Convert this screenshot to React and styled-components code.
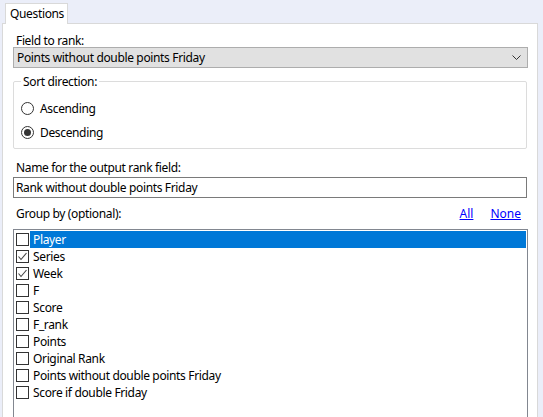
import React from "react";
import styled, { createGlobalStyle } from "styled-components";

const GlobalStyle = createGlobalStyle`
  body {
    margin: 0;
    background: #ebeef9;
    font-family: "Noto Sans", "Open Sans", sans-serif;
    font-size: 12px;
    letter-spacing: -0.35px;
    color: #000;
  }
`;

const Window = styled.div`
  width: 543px;
  height: 417px;
  overflow: hidden;
  box-sizing: border-box;
  padding: 3px 0 0 2px;
`;

const TabStrip = styled.div`
  display: flex;
  padding-left: 3px;
`;

const Tab = styled.div`
  height: 21px;
  box-sizing: border-box;
  width: 63px;
  padding-left: 4px;
  line-height: 19px;
  background: #fff;
  border: 1px solid #d9d9d9;
  border-bottom: none;
  margin-bottom: -1px;
  position: relative;
  z-index: 1;
`;

const Panel = styled.div`
  width: 536px;
  height: 400px;
  box-sizing: border-box;
  background: #fff;
  border: 1px solid #d9d9d9;
  padding: 10px 9px 0 10px;
  display: flex;
  flex-direction: column;
`;

const Label = styled.div`
  height: 13px;
  line-height: 13px;
  padding-left: 3px;
  margin-top: ${(p) => p.$top || 0}px;
  white-space: nowrap;
`;

const Select = styled.div`
  height: 21px;
  box-sizing: border-box;
  background: #e1e1e1;
  border: 1px solid #adadad;
  display: flex;
  align-items: center;
  justify-content: space-between;
  padding: 0 6px 0 3px;
`;

const GroupBox = styled.fieldset`
  margin: 7px 1px 0 0;
  padding: 13px 0 0 7px;
  height: 74px;
  box-sizing: border-box;
  border: 1px solid #dcdcdc;
  border-radius: 2px;
  display: flex;
  flex-direction: column;
  gap: 10px;
`;

const Legend = styled.legend`
  padding: 0 2px;
  margin-left: 0;
  line-height: 13px;
`;

const RadioRow = styled.label`
  display: flex;
  align-items: center;
  gap: 6px;
  height: 14px;
`;

const RadioCircle = styled.span`
  width: 13px;
  height: 13px;
  box-sizing: border-box;
  border: 1px solid #333;
  border-radius: 50%;
  display: flex;
  align-items: center;
  justify-content: center;
  &::after {
    content: "";
    display: ${(p) => (p.$checked ? "block" : "none")};
    width: 7px;
    height: 7px;
    border-radius: 50%;
    background: #333;
  }
`;

const TextInput = styled.div`
  height: 21px;
  box-sizing: border-box;
  border: 1px solid #7a7a7a;
  margin-top: 3px;
  padding-left: 2px;
  line-height: 19px;
  margin-right: 1px;
`;

const GroupHeader = styled.div`
  display: flex;
  justify-content: space-between;
  align-items: flex-end;
  margin-top: 9px;
`;

const Links = styled.div`
  display: flex;
  gap: 17px;
  padding-right: 7px;
`;

const Link = styled.a`
  color: #0000ff;
  text-decoration: underline;
  line-height: 13px;
  letter-spacing: 0;
  cursor: pointer;
`;

const ListBox = styled.div`
  margin-top: 9px;
  flex: 1;
  border: 1px solid #828790;
  border-bottom: none;
  padding: 1px 1px 0 2px;
`;

const Item = styled.div`
  display: flex;
  align-items: center;
  height: 17px;
`;

const CheckBox = styled.span`
  width: 13px;
  height: 13px;
  box-sizing: border-box;
  border: 1px solid #333;
  margin-right: 1px;
  flex: none;
  display: flex;
  align-items: center;
  justify-content: center;
`;

const ItemText = styled.span`
  flex: 1;
  height: 17px;
  line-height: 17px;
  padding-left: 3px;
  background: ${(p) => (p.$selected ? "#0078d7" : "transparent")};
  color: ${(p) => (p.$selected ? "#fff" : "#000")};
`;

const fields = [
  { name: "Player", checked: false, selected: true },
  { name: "Series", checked: true },
  { name: "Week", checked: true },
  { name: "F" },
  { name: "Score" },
  { name: "F_rank" },
  { name: "Points" },
  { name: "Original Rank" },
  { name: "Points without double points Friday" },
  { name: "Score if double Friday" },
];

const Chevron = () => (
  <svg width="9" height="5" viewBox="0 0 9 5">
    <polyline points="0.5,0.5 4.5,4.5 8.5,0.5" fill="none" stroke="#333" strokeWidth="1" />
  </svg>
);

const Check = () => (
  <svg width="11" height="11" viewBox="0 0 11 11">
    <polyline points="1.5,5.5 4,8.5 9.5,2" fill="none" stroke="#444" strokeWidth="1.1" />
  </svg>
);

export default function App() {
  return (
    <Window>
      <GlobalStyle />
      <TabStrip>
        <Tab>Questions</Tab>
      </TabStrip>
      <Panel>
        <Label>Field to rank:</Label>
        <Select>
          <span>Points without double points Friday</span>
          <Chevron />
        </Select>
        <GroupBox>
          <Legend>Sort direction:</Legend>
          <RadioRow>
            <RadioCircle />
            Ascending
          </RadioRow>
          <RadioRow>
            <RadioCircle $checked />
            Descending
          </RadioRow>
        </GroupBox>
        <Label $top={12}>Name for the output rank field:</Label>
        <TextInput>Rank without double points Friday</TextInput>
        <GroupHeader>
          <Label>Group by (optional):</Label>
          <Links>
            <Link>All</Link>
            <Link>None</Link>
          </Links>
        </GroupHeader>
        <ListBox>
          {fields.map((f) => (
            <Item key={f.name}>
              <CheckBox>{f.checked && <Check />}</CheckBox>
              <ItemText $selected={f.selected}>{f.name}</ItemText>
            </Item>
          ))}
        </ListBox>
      </Panel>
    </Window>
  );
}
